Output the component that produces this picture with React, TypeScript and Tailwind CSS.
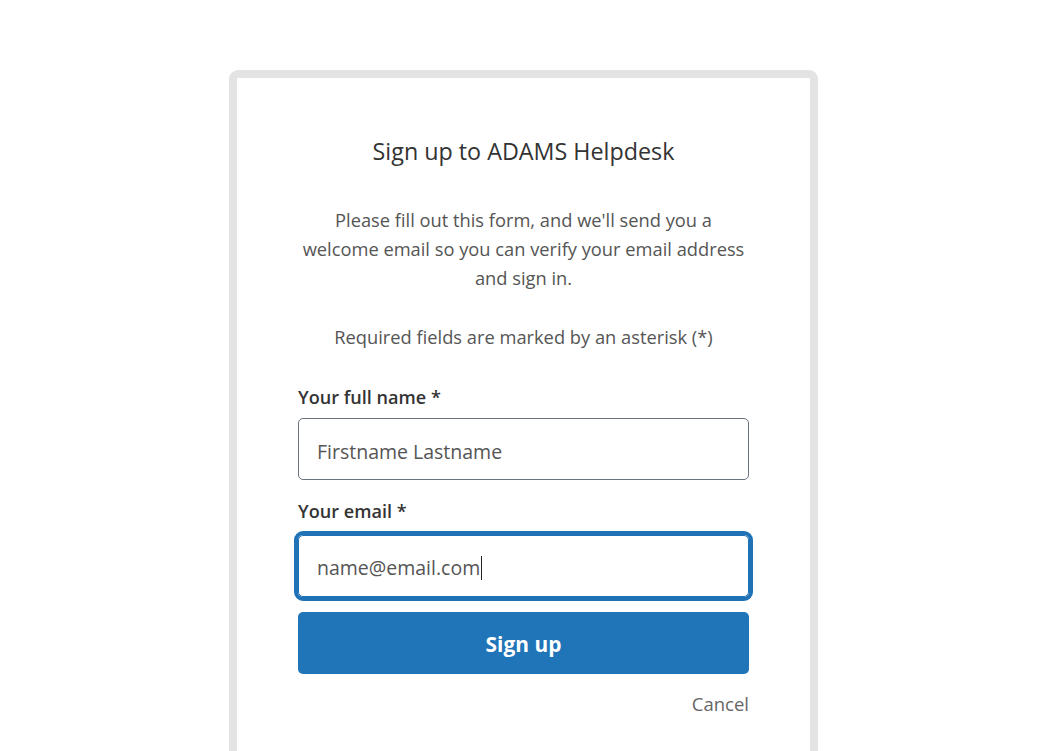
import React from "react";

export default function App() {
  return (
    <div
      className="w-full bg-white flex justify-center pt-[70px] overflow-hidden h-[751px]"
      style={{ fontFamily: '"Segoe UI", "Open Sans", "Noto Sans", sans-serif' }}
    >
      <div className="w-[589px] h-[720px] border-[8px] border-b-0 border-[#e3e3e3] rounded-t-[9px] bg-white px-[61px] flex flex-col shrink-0">
        <h1 className="text-[23.3px] leading-[30px] text-[#333] text-center mt-[58px] font-normal whitespace-nowrap">
          Sign up to ADAMS Helpdesk
        </h1>
        <p className="text-[18.3px] leading-[29px] text-[#555] text-center mt-[39px] whitespace-nowrap">
          Please fill out this form, and we'll send you a
          <br />
          welcome email so you can verify your email address
          <br />
          and sign in.
        </p>
        <p className="text-[18.3px] leading-[29px] text-[#555] text-center mt-[30px] whitespace-nowrap">
          Required fields are marked by an asterisk (*)
        </p>

        <label className="text-[18.1px] leading-[24px] font-semibold text-[#333] mt-[34px]">
          Your full name *
        </label>
        <div className="mt-[9px] h-[62px] border border-[#6b7280] rounded-[5px] flex items-center px-[18px] pt-[5px] text-[19.5px] text-[#555]">
          Firstname Lastname
        </div>

        <label className="text-[18.1px] leading-[24px] font-semibold text-[#333] mt-[19px]">
          Your email *
        </label>
        <div className="mt-[12px] h-[62px] border border-[#2072b6] outline-4 outline-[#2072b6] rounded-[5px] flex items-center px-[18px] pt-[3px] text-[19.5px] text-[#555]">
          <span>name@email.com</span>
          <span className="inline-block w-px h-[24px] bg-[#222] ml-[1px]" />
        </div>

        <button className="mt-[15px] h-[62px] rounded-[5px] bg-[#2074b8] text-white text-[20.9px] font-bold pt-[4px]">
          Sign up
        </button>

        <div className="mt-[17px] text-right text-[18.5px] leading-[26px] text-[#666]">
          Cancel
        </div>
      </div>
    </div>
  );
}
